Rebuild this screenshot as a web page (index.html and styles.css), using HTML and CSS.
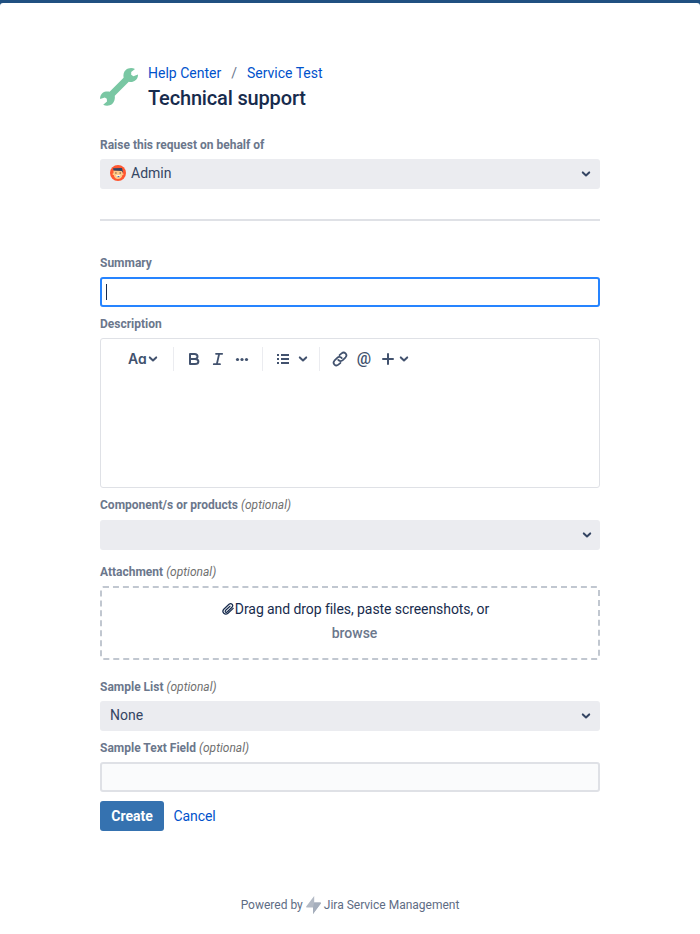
FILE: index.html
```html
<!DOCTYPE html>
<html lang="en">
<head>
    <meta charset="UTF-8">
    <title>Technical support</title>
    <link rel="stylesheet" href="styles.css">
</head>
<body>
    <div class="page">
        <header class="header">
            <svg class="wrench" width="40" height="40" viewBox="0 0 40 40">
                <path fill="#79c7a3" d="M25.8 3C28.2 .8 32 .4 35 2L31.2 5L31.2 7.8L33.4 9.2L38 7.5C38.1 11.4 35.6 14.4 32 14.9C30.9 15.1 29.8 15 28.8 14.8L14.8 28.8C15.2 32 14.4 35 12.2 37C9.8 39 5.8 39.2 3.2 37.8L7 34.6L6.8 31.8L4.8 30.4L.1 32C0 28 2.4 25 6 24.5C7.3 24.3 8.4 24.4 9.6 24.7L23.6 10.7C23.1 7.6 23.6 5 25.8 3Z"/>
            </svg>
            <div>
                <nav class="breadcrumbs">
                    <a href="#">Help Center</a>
                    <span>/</span>
                    <a href="#">Service Test</a>
                </nav>
                <h1>Technical support</h1>
            </div>
        </header>

        <form class="form">
            <div class="field behalf">
                <label>Raise this request on behalf of</label>
                <div class="select">
                    <svg class="avatar" width="16" height="16" viewBox="0 0 16 16">
                        <circle cx="8" cy="8" r="8" fill="#ff5630"/>
                        <path fill="#ffc988" d="M3.5 5.5H12.5V8.5H13.4V10H12.4C12 12.5 10.4 14 8 14S4.3 12.7 3.8 10H2.7V8.3H3.5Z"/>
                        <path fill="#344563" d="M3 3.2L12 3L13.2 7.8L11.6 6L3.6 5.5Z"/>
                        <path fill="#5e4638" d="M5.2 7.5H6.6V8.5H5.2ZM9.5 7.5H11V8.5H9.5Z"/>
                        <path fill="#fff" d="M6 10.3H10.4L9.3 12H7.2Z"/>
                        <path fill="#4c6fa5" d="M7.5 11H9.4V12.2H7.5Z"/>
                    </svg>
                    <span>Admin</span>
                    <svg class="chevron" width="10" height="8" viewBox="0 0 10 8"><path d="M1.8 2.4L5 5.4L8.2 2.4"/></svg>
                </div>
            </div>

            <div class="field summary">
                <label>Summary</label>
                <div class="text-input focused"><span class="caret"></span></div>
            </div>

            <div class="field">
                <label>Description</label>
                <div class="editor">
                    <div class="toolbar">
                        <div class="group group-style">
                            <span class="aa">Aa</span>
                            <svg class="chevron" width="10" height="8" viewBox="0 0 10 8"><path d="M1.8 2.4L5 5.4L8.2 2.4"/></svg>
                        </div>
                        <div class="group group-format">
                            <svg class="line" width="24" height="24" viewBox="0 0 24 24"><path d="M8 7H12.5C16.5 7 16.5 12 12.5 12H8ZM8 12H13C17.5 12 17.5 17 13 17H8Z"/></svg>
                            <svg class="line thin" width="24" height="24" viewBox="0 0 24 24"><path d="M10 6.8H16.2M7.8 17.2H14M13.2 6.8L10.8 17.2"/></svg>
                            <svg class="solid" width="24" height="24" viewBox="0 0 24 24"><circle cx="7.5" cy="12.5" r="1.6"/><circle cx="12" cy="12.5" r="1.6"/><circle cx="16.5" cy="12.5" r="1.6"/></svg>
                        </div>
                        <div class="group group-list">
                            <svg class="solid" width="24" height="24" viewBox="0 0 24 24"><path d="M6 7H8V9H6ZM6 11H8V13H6ZM6 15H8V17H6ZM10 7H18V9H10ZM10 11H18V13H10ZM10 15H18V17H10Z"/></svg>
                            <svg class="chevron" width="10" height="8" viewBox="0 0 10 8"><path d="M1.8 2.4L5 5.4L8.2 2.4"/></svg>
                        </div>
                        <div class="group group-insert">
                            <svg class="line link" width="24" height="24" viewBox="0 0 24 24"><path d="M11.5 8.2L13.6 6.4C16.4 4 20 7.6 17.6 10.3L14.8 13.2C13.4 14.5 11.4 14.3 10.2 12.9M12.5 15.8L10.4 17.6C7.6 20 4 16.4 6.4 13.7L9.2 10.8C10.6 9.5 12.6 9.7 13.8 11.1"/></svg>
                            <span class="mention">@</span>
                            <svg class="line" width="24" height="24" viewBox="0 0 24 24"><path d="M12 7V17M7 12H17"/></svg>
                            <svg class="chevron" width="10" height="8" viewBox="0 0 10 8"><path d="M1.8 2.4L5 5.4L8.2 2.4"/></svg>
                        </div>
                    </div>
                </div>
            </div>

            <div class="field components">
                <label>Component/s or products <em>(optional)</em></label>
                <div class="select">
                    <svg class="chevron" width="10" height="8" viewBox="0 0 10 8"><path d="M1.8 2.4L5 5.4L8.2 2.4"/></svg>
                </div>
            </div>

            <div class="field attachment">
                <label>Attachment <em>(optional)</em></label>
                <div class="dropzone">
                    <p><svg class="clip" width="14" height="14" viewBox="0 0 14 14"><path d="M12.2 6.4L7 11.3C4 13.7 .2 10.2 2.8 7.2L8 2.3C10.2 .5 13 3 11 5.3L6.4 9.8C5 11 3.4 9.6 4.7 8.2L9 4.2"/></svg>Drag and drop files, paste screenshots, or</p>
                    <a href="#" class="browse">browse</a>
                </div>
            </div>

            <div class="field sample-list">
                <label>Sample List <em>(optional)</em></label>
                <div class="select">
                    <span>None</span>
                    <svg class="chevron" width="10" height="8" viewBox="0 0 10 8"><path d="M1.8 2.4L5 5.4L8.2 2.4"/></svg>
                </div>
            </div>

            <div class="field">
                <label>Sample Text Field <em>(optional)</em></label>
                <div class="text-input"></div>
            </div>

            <div class="actions">
                <button type="button">Create</button>
                <a href="#">Cancel</a>
            </div>
        </form>

        <footer class="footer">
            <span>Powered by</span>
            <svg width="15" height="18" viewBox="0 0 15 18"><path fill="#b3bac5" d="M8.2 0V6.6H14.4C15 6.6 15.1 7.2 14.8 7.6L7 18V11.4H.7C.1 11.4 -.1 10.8 .2 10.4Z"/><path fill="#a5aebc" d="M8.2 6.6H14.4C15 6.6 15.1 7.2 14.8 7.6L7 18V11.4Z"/></svg>
            <span>Jira Service Management</span>
        </footer>
    </div>
</body>
</html>
```

FILE: styles.css
```css
* {
    margin: 0;
    padding: 0;
    box-sizing: border-box;
}

body {
    background: #205081;
    font-family: Roboto, sans-serif;
    font-size: 14px;
    line-height: 20px;
    color: #172b4d;
    padding-top: 3px;
}

a {
    color: #0052cc;
    text-decoration: none;
}

.page {
    min-height: 931px;
    padding: 60px 100px 0;
    background: white;
    border-radius: 3px 3px 0 0;
}

.header {
    display: flex;
    gap: 8px;
    height: 50px;
}

.wrench {
    margin-top: 4px;
}

.breadcrumbs {
    display: flex;
    gap: 10px;
    color: #6b778c;
}

h1 {
    font-size: 20px;
    line-height: 24px;
    font-weight: 500;
    letter-spacing: -0.008em;
    margin-top: 3px;
}

.form {
    margin-top: 24px;
}

.field {
    margin-bottom: 9px;
}

label {
    display: block;
    margin-bottom: 6px;
    font-size: 12px;
    line-height: 16px;
    font-weight: 700;
    color: #6b778c;
}

label em {
    font-weight: 400;
    color: #707070;
}

.behalf {
    padding-bottom: 30px;
    border-bottom: 2px solid #dfe1e6;
    margin-bottom: 34px;
}

.select {
    display: flex;
    align-items: center;
    height: 30px;
    padding: 0 9px 2px 10px;
    background: #ebecf0;
    border-radius: 3px;
    color: #344563;
}

.avatar {
    margin-right: 5px;
}

.chevron {
    fill: none;
    stroke: #344563;
    stroke-width: 2;
    stroke-linecap: round;
    stroke-linejoin: round;
}

.select .chevron {
    margin-left: auto;
    margin-top: 2px;
}

.text-input {
    height: 30px;
    padding: 5px 4px;
    background: #fafbfc;
    border: 2px solid #dfe1e6;
    border-radius: 3px;
}

.focused {
    background: white;
    border-color: #2684ff;
}

.caret {
    display: block;
    width: 1px;
    height: 16px;
    background: #172b4d;
}

.editor {
    height: 150px;
    border: 1px solid #dfe1e6;
    border-radius: 3px;
}

.toolbar {
    display: flex;
    padding: 8px 0 0 27px;
}

.group {
    display: flex;
    align-items: center;
    height: 24px;
}

.group + .group {
    border-left: 1px solid #ebecf0;
}

.group-style {
    width: 45px;
}

.group-format {
    width: 89px;
    padding-left: 8px;
}

.group-list {
    width: 57px;
    padding-left: 8px;
    gap: 3px;
}

.group-insert {
    padding-left: 8px;
}

/* cv11 is the single-storey a */
.aa {
    width: 20px;
    font-family: Inter, sans-serif;
    font-size: 14px;
    font-weight: 600;
    font-feature-settings: "cv11";
    color: #42526e;
}

.group .chevron {
    flex: none;
    stroke: #42526e;
}

.line {
    fill: none;
    stroke: #42526e;
    stroke-width: 2;
    stroke-linecap: round;
    stroke-linejoin: round;
}

.thin {
    stroke-width: 1.8;
}

.link {
    stroke-width: 1.7;
}

.solid {
    fill: #42526e;
}

.mention {
    width: 24px;
    text-align: center;
    font-size: 16px;
    font-weight: 500;
    color: #42526e;
}

.group-insert .chevron {
    margin-left: -1px;
}

.components {
    margin-bottom: 14px;
}

.components label {
    margin-bottom: 7px;
}

.components .select {
    padding-right: 8px;
}

.attachment {
    margin-bottom: 19px;
}

.dropzone {
    height: 74px;
    padding: 9px 0 0 9px;
    border: 2px dashed #c1c7d0;
    border-radius: 3px;
    text-align: center;
    line-height: 24px;
}

.dropzone p {
    padding-left: 1px;
    letter-spacing: -0.005em;
}

.clip {
    fill: none;
    stroke: #172b4d;
    stroke-width: 1.2;
    stroke-linecap: round;
    vertical-align: -2px;
}

.browse {
    display: block;
    color: #6b778c;
    font-weight: 500;
}

.actions {
    display: flex;
    align-items: center;
    gap: 9.5px;
    letter-spacing: -0.005em;
}

button {
    width: 64px;
    height: 30px;
    border: none;
    border-radius: 3px;
    background: #3572b0;
    color: white;
    font-family: inherit;
    font-size: 14px;
    font-weight: 700;
}

.footer {
    display: flex;
    justify-content: center;
    align-items: center;
    gap: 3px;
    margin-top: 64px;
    font-size: 12px;
    color: #5e6c84;
}
```
